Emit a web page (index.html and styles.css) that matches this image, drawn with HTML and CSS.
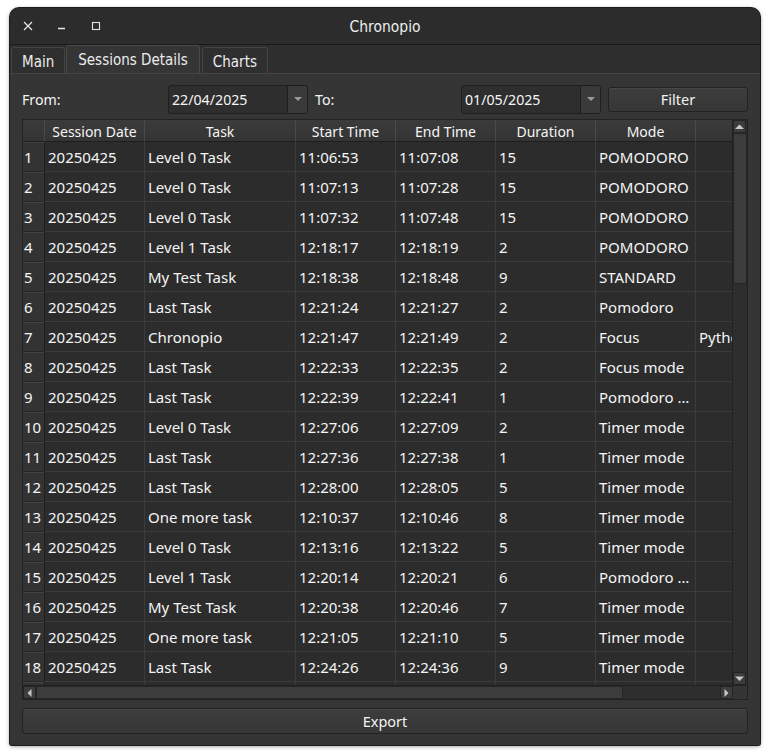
FILE: index.html
```html
<!DOCTYPE html>
<html>
<head>
<meta charset="utf-8">
<link rel="stylesheet" href="styles.css">
</head>
<body>
<div class="window">
  <div class="titlebar">
    <div class="controls">
      <span class="ctl ctl-close"><svg width="10" height="10" viewBox="0 0 10 10"><path d="M1 1 L9 9 M9 1 L1 9" stroke="#e6e6e6" stroke-width="1.2"/></svg></span>
      <span class="ctl"><svg width="10" height="10" viewBox="0 0 10 10"><path d="M1 7.5 H8" stroke="#e6e6e6" stroke-width="1.3"/></svg></span>
      <span class="ctl"><svg width="10" height="10" viewBox="0 0 10 10"><rect x="1.5" y="1.5" width="7" height="7" fill="none" stroke="#e6e6e6" stroke-width="1.1"/></svg></span>
    </div>
    <div class="title">Chronopio</div>
  </div>
  <div class="tabs">
    <div class="tab">Main</div>
    <div class="tab active">Sessions Details</div>
    <div class="tab">Charts</div>
  </div>
  <div class="pane">
    <div class="filters">
      <span class="lbl from">From:</span>
      <div class="combo"><span class="val">22/04/2025</span><span class="drop"><svg width="8" height="5" viewBox="0 0 8 5"><path d="M0 0 H8 L4 4 Z" fill="#9a9a9a"/></svg></span></div>
      <span class="lbl to">To:</span>
      <div class="combo"><span class="val">01/05/2025</span><span class="drop"><svg width="8" height="5" viewBox="0 0 8 5"><path d="M0 0 H8 L4 4 Z" fill="#9a9a9a"/></svg></span></div>
      <button class="btn filter">Filter</button>
    </div>
    <div class="tablebox">
      <div class="main">
        <div class="grid" id="grid">
          <div class="hc corner"></div>
          <div class="hc">Session Date</div>
          <div class="hc">Task</div>
          <div class="hc">Start Time</div>
          <div class="hc">End Time</div>
          <div class="hc">Duration</div>
          <div class="hc">Mode</div>
          <div class="hc last"></div>
        </div>
        <div class="vscroll">
          <div class="sbtn"><svg width="9" height="6" viewBox="0 0 9 6"><path d="M0 5 H9 L4.5 0.5 Z" fill="#c8c8c8"/></svg></div>
          <div class="vtrack"><div class="vhandle"></div></div>
          <div class="sbtn"><svg width="9" height="6" viewBox="0 0 9 6"><path d="M0 0.5 H9 L4.5 5 Z" fill="#c8c8c8"/></svg></div>
        </div>
      </div>
      <div class="hscroll">
        <div class="sbtn h"><svg width="5" height="8" viewBox="0 0 5 8"><path d="M4.5 0 V8 L0.5 4 Z" fill="#c8c8c8"/></svg></div>
        <div class="htrack"><div class="hhandle"></div></div>
        <div class="sbtn h"><svg width="5" height="8" viewBox="0 0 5 8"><path d="M0.5 0 V8 L4.5 4 Z" fill="#c8c8c8"/></svg></div>
        <div class="hcorner"></div>
      </div>
    </div>
    <button class="btn export">Export</button>
  </div>
</div>
<script src="app.js"></script>
</body>
</html>
```
FILE: app.js
```js
const rows = [
["20250425","Level 0 Task","11:06:53","11:07:08","15","POMODORO",""],
["20250425","Level 0 Task","11:07:13","11:07:28","15","POMODORO",""],
["20250425","Level 0 Task","11:07:32","11:07:48","15","POMODORO",""],
["20250425","Level 1 Task","12:18:17","12:18:19","2","POMODORO",""],
["20250425","My Test Task","12:18:38","12:18:48","9","STANDARD",""],
["20250425","Last Task","12:21:24","12:21:27","2","Pomodoro",""],
["20250425","Chronopio","12:21:47","12:21:49","2","Focus","Python"],
["20250425","Last Task","12:22:33","12:22:35","2","Focus mode",""],
["20250425","Last Task","12:22:39","12:22:41","1","Pomodoro …",""],
["20250425","Level 0 Task","12:27:06","12:27:09","2","Timer mode",""],
["20250425","Last Task","12:27:36","12:27:38","1","Timer mode",""],
["20250425","Last Task","12:28:00","12:28:05","5","Timer mode",""],
["20250425","One more task","12:10:37","12:10:46","8","Timer mode",""],
["20250425","Level 0 Task","12:13:16","12:13:22","5","Timer mode",""],
["20250425","Level 1 Task","12:20:14","12:20:21","6","Pomodoro …",""],
["20250425","My Test Task","12:20:38","12:20:46","7","Timer mode",""],
["20250425","One more task","12:21:05","12:21:10","5","Timer mode",""],
["20250425","Last Task","12:24:26","12:24:36","9","Timer mode",""],
["20250425","Level 0 Task","12:25:01","12:25:05","4","Timer mode",""]
];
const g = document.getElementById('grid');
rows.forEach((r, i) => {
  const n = document.createElement('div');
  n.className = 'rh';
  n.textContent = i + 1;
  g.appendChild(n);
  r.forEach((c, j) => {
    const d = document.createElement('div');
    d.className = 'cell' + (j === 6 ? ' last' : '');
    d.textContent = c;
    g.appendChild(d);
  });
});
```
FILE: styles.css
```css
html, body { margin: 0; padding: 0; background: #ffffff; }
body { width: 770px; height: 755px; overflow: hidden; font-family: "Noto Sans", "Open Sans", sans-serif; color: #f5f5f5; }

.window {
  margin: 8px 0 0 10px;
  width: 750px;
  height: 737px;
  background: #353535;
  border-radius: 9px 9px 2px 2px;
  box-shadow: 0 0 0 1px #1c1c1c, 0 1px 4px rgba(0,0,0,0.5);
  display: flex;
  flex-direction: column;
  overflow: hidden;
}

.titlebar {
  height: 36px;
  background: #2c2c2c;
  border-bottom: 1px solid #1a1a1a;
  position: relative;
  display: flex;
  align-items: center;
  flex: none;
}
.controls { display: flex; gap: 24px; padding-left: 13px; }
.ctl { width: 10px; height: 10px; display: flex; }
.title {
  position: absolute; left: 0; right: 0; top: 0; bottom: 0;
  padding-top: 2px;
  display: flex; align-items: center; justify-content: center;
  font-family: "DejaVu Sans Condensed", "DejaVu Sans", sans-serif; font-stretch: condensed;
  font-size: 15.5px; color: #eeeeee;
}

.tabs {
  display: flex;
  height: 28px;
  align-items: flex-end;
  padding-left: 1px;
  background: #2e2e2e;
  flex: none;
}
.tab {
  height: 26px;
  box-sizing: border-box;
  padding: 2px 10px 0 10px;
  display: flex; align-items: center;
  font-family: "DejaVu Sans Condensed", "DejaVu Sans", sans-serif; font-stretch: condensed;
  font-size: 15px;
  background: #2f2f2f;
  border: 1px solid #444;
  border-bottom: none;
  border-radius: 3px 3px 0 0;
  margin-right: 1px;
  color: #ececec;
}
.tab.active {
  height: 28px;
  background: #353535;
  padding: 1px 11px 0 11px;
  border-color: #4a4a4a;
  margin-right: 2px;
}

.pane {
  flex: 1;
  background: #353535;
  border-top: 1px solid #444;
  padding: 10px 12px 9px 12px;
  display: flex;
  flex-direction: column;
}

.filters {
  display: flex;
  align-items: center;
  height: 30px;
}
.lbl { font-size: 14.2px; }
.lbl.from { width: 146px; }
.lbl.to { width: 146px; margin-left: 7px; }
.combo {
  width: 140px; height: 29px;
  box-sizing: border-box;
  background: #2e2e2e;
  border: 1px solid #1f1f1f;
  border-radius: 3px;
  display: flex;
  align-items: stretch;
}
.combo .val { flex: 1; display: flex; align-items: center; padding-left: 3px; font-size: 14.2px; }
.combo .drop {
  width: 19px;
  background: #3a3a3a;
  border-left: 1px solid #1f1f1f;
  display: flex; align-items: center; justify-content: center;
  border-radius: 0 2px 2px 0;
}
.btn {
  font-family: "Noto Sans", "Open Sans", sans-serif;
  font-size: 14.5px;
  color: #f2f2f2;
  background: linear-gradient(#3d3d3d, #363636);
  border: 1px solid #222;
  border-radius: 3px;
  box-shadow: inset 0 1px 0 #474747;
  padding: 0;
}
.btn.filter { width: 140px; height: 25px; margin-left: 7px; }

.tablebox {
  margin-top: 5px;
  height: 581px;
  border: 1px solid #222;
  background: #2b2b2b;
  display: flex;
  flex-direction: column;
  box-sizing: border-box;
}
.main { flex: 1; display: flex; overflow: hidden; }
.grid {
  flex: 1;
  display: grid;
  grid-template-columns: 22px 100px 151px 100px 100px 100px 100px 38px;
  grid-auto-rows: 30px;
  grid-template-rows: 22px;
  overflow: hidden;
  align-content: start;
}
.hc {
  background: linear-gradient(#3b3b3b, #343434);
  border-right: 1px solid #4a4a4a;
  border-bottom: 1px solid #1e1e1e;
  display: flex; align-items: center; justify-content: center;
  padding-top: 2px;
  font-size: 14px;
  white-space: nowrap;
  overflow: hidden;
}
.hc.last { border-right: none; }
.rh {
  background: #333333;
  border-right: 1px solid #1f1f1f;
  border-bottom: 1px solid #262626;
  box-shadow: inset 0 1px 0 #434343;
  display: flex; align-items: center;
  padding-left: 1px;
  font-size: 15px;
}
.cell {
  background: #2c2c2c;
  border-right: 1px solid #3c3c3c;
  border-bottom: 1px solid #3c3c3c;
  display: flex; align-items: center;
  padding-left: 3px;
  font-size: 15px;
  white-space: nowrap;
  overflow: hidden;
}
.cell.last { border-right: none; }

.vscroll {
  width: 14px;
  flex: none;
  display: flex; flex-direction: column;
  background: #2f2f2f;
  border-left: 1px solid #222;
}
.sbtn {
  width: 13px; height: 13px;
  background: #3c3c3c;
  border: 1px solid #242424;
  box-sizing: border-box;
  display: flex; align-items: center; justify-content: center;
  flex: none;
}
.vtrack { flex: 1; background: #2e2e2e; }
.vhandle { height: 151px; background: #3c3c3c; border: 1px solid #262626; box-sizing: border-box; }

.hscroll {
  height: 13px;
  display: flex;
  flex: none;
  background: #2f2f2f;
  border-top: 1px solid #222;
}
.sbtn.h { height: 13px; width: 13px; }
.htrack { flex: 1; background: #2e2e2e; }
.hhandle { width: 587px; height: 100%; background: #3c3c3c; border: 1px solid #262626; box-sizing: border-box; }
.hcorner { width: 14px; background: #353535; }

.btn.export { margin-top: 8px; height: 26px; width: 100%; }
```
